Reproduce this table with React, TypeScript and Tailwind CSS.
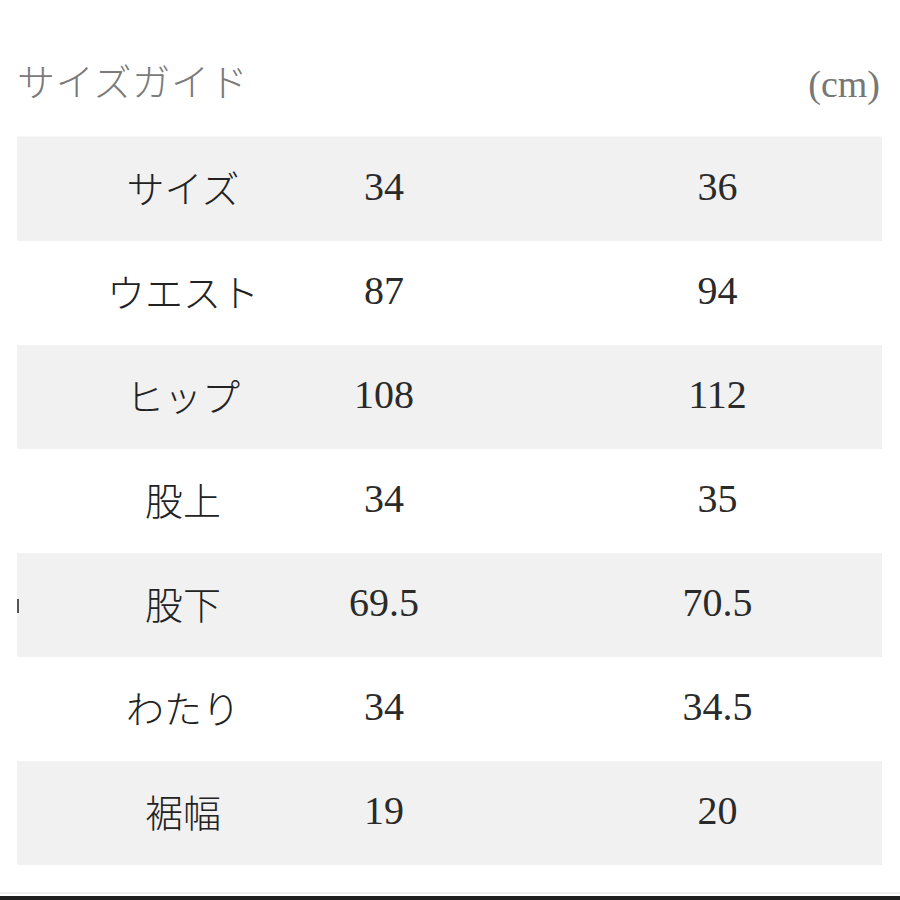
const rows = [
  { label: "サイズ", a: "34", b: "36" },
  { label: "ウエスト", a: "87", b: "94" },
  { label: "ヒップ", a: "108", b: "112" },
  { label: "股上", a: "34", b: "35" },
  { label: "股下", a: "69.5", b: "70.5" },
  { label: "わたり", a: "34", b: "34.5" },
  { label: "裾幅", a: "19", b: "20" },
];

const jp = { fontFamily: '"Noto Sans CJK JP", sans-serif' };
const serif = { fontFamily: '"Liberation Serif", "Noto Sans CJK JP", serif' };

export default function App() {
  return (
    <div className="w-[900px] h-[900px] bg-white flex flex-col overflow-hidden">
      {/* Header */}
      <div className="h-[136px] flex items-start justify-between pl-[17px] pr-[20px] pt-[55px]">
        <h1 className="text-[38px] leading-[50px] text-[#7a7a7a] font-light tracking-[0.02em]" style={jp}>
          サイズガイド
        </h1>
        <span className="text-[38px] leading-[50px] text-[#777] mt-[4px]" style={serif}>
          (cm)
        </span>
      </div>

      {/* Table */}
      <div className="mx-[17px] w-[865px] border-t border-[#f8f8f8]">
        {rows.map((r, i) => (
          <div
            key={r.label}
            className={`relative grid grid-cols-[332px_70px_1fr] items-center h-[104px] pb-[5px] ${
              i % 2 === 0 ? "bg-[#f1f1f1]" : "bg-white"
            }`}
          >
            {i === 4 && <span className="absolute left-0 top-[46px] w-[2px] h-[14px] bg-[#555]" />}
            <div className="text-center text-[38px] font-light text-[#222]" style={jp}>
              {r.label}
            </div>
            <div className="text-center text-[40px] text-[#2a2a2a] whitespace-nowrap" style={serif}>
              {r.a}
            </div>
            <div className="pl-[134px] text-center text-[40px] text-[#2a2a2a]" style={serif}>
              {r.b}
            </div>
          </div>
        ))}
      </div>

      <div className="flex-1" />
      <div className="h-[2px] bg-[#ececec]" />
      <div className="h-[2px] bg-white" />
      <div className="h-[4px] bg-[#1e1e1e]" />
    </div>
  );
}
